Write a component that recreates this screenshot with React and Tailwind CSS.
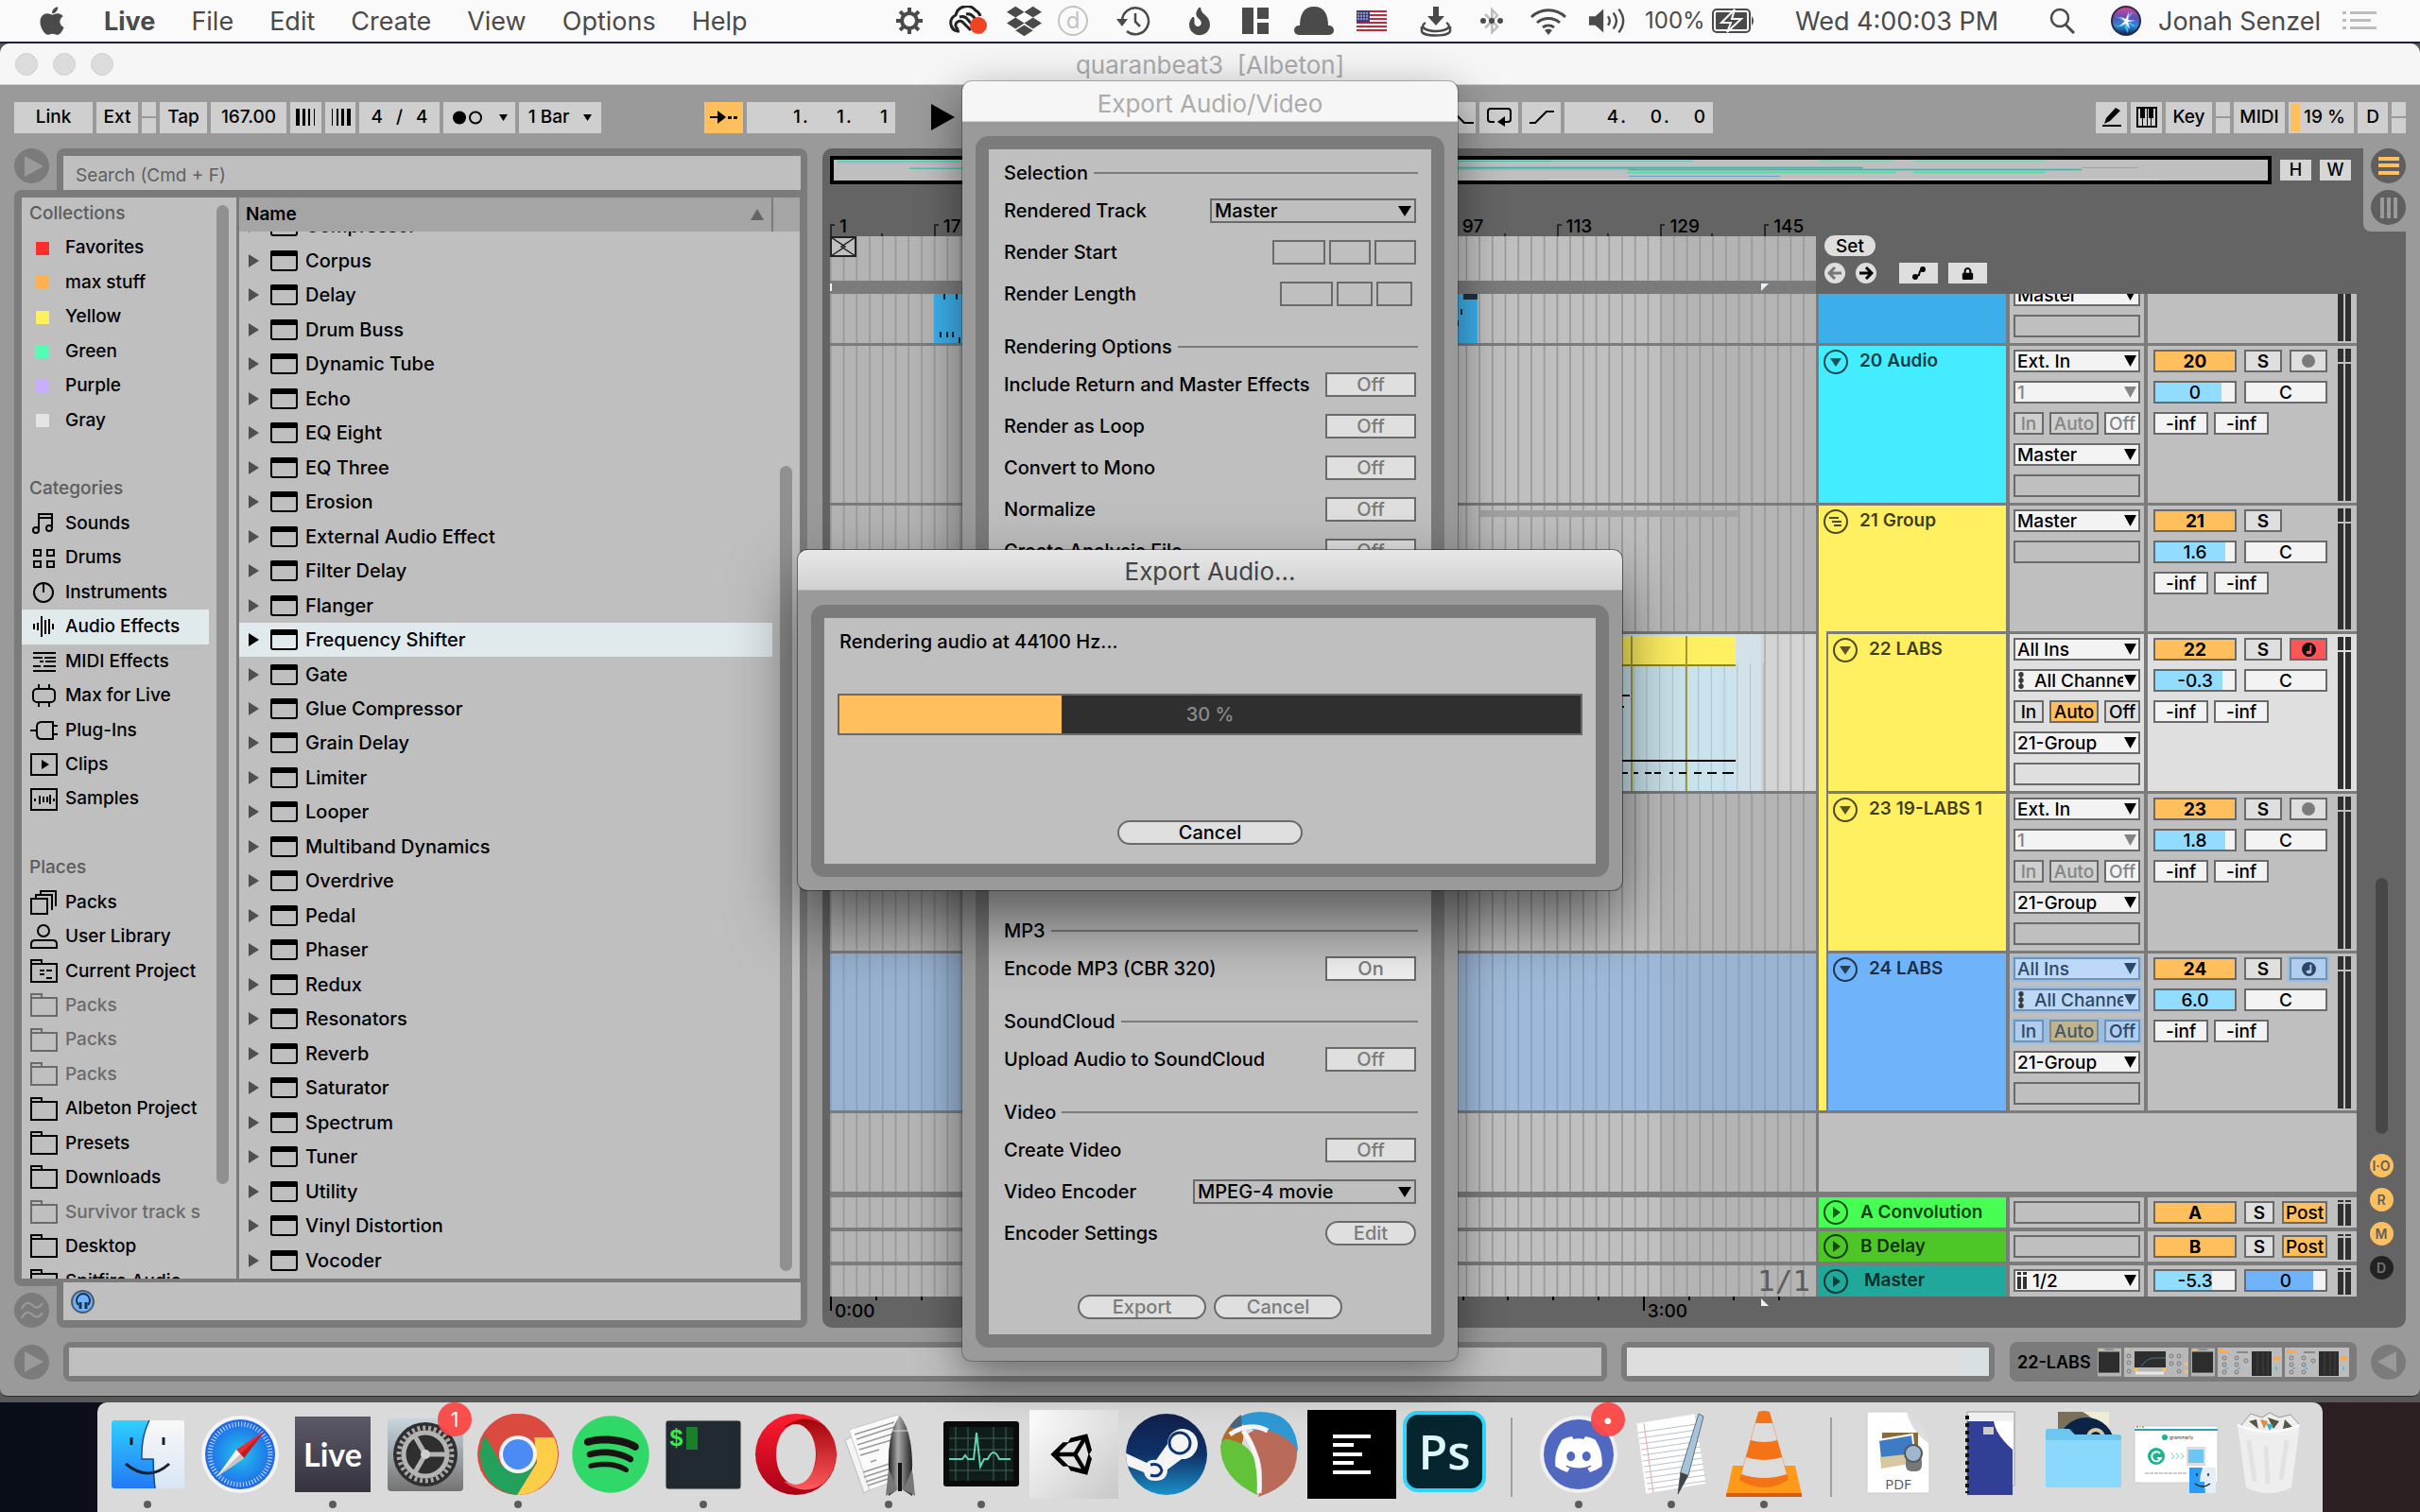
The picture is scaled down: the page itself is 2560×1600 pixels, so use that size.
import React from "react";
import { FaApple, FaDropbox, FaSpotify, FaUnity, FaBluetoothB, FaLock, FaFire } from "react-icons/fa";
import { FaDiscord } from "react-icons/fa6";

/* ---------- menu bar ---------- */

const GearIcon = () => (
  <svg viewBox="0 0 30 30" className="size-[30px]">
    {[0, 45, 90, 135, 180, 225, 270, 315].map((a) => (
      <rect key={a} x="13" y="1" width="4" height="7" fill="#4a4a4a" transform={`rotate(${a} 15 15)`} />
    ))}
    <circle cx="15" cy="15" r="8" fill="none" stroke="#4a4a4a" strokeWidth="4" />
  </svg>
);

const CloudIcon = () => (
  <svg viewBox="0 0 44 32" className="h-[32px] w-[44px]" fill="none">
    <path d="M13 27H11a9 9 0 0 1-2-17A12 12 0 0 1 30 5q4 2 5 6" stroke="#222" strokeWidth="3" />
    <path d="M25 26l-8-8a4.500 4.500 0 1 0-5 7" stroke="#222" strokeWidth="3" />
    <path d="M13 12a8 8 0 0 1 9 3l6 7M20 9a8 8 0 0 1 8 3l4 4" stroke="#222" strokeWidth="3" />
    <circle cx="33" cy="21" r="9" fill="#ee4423" />
  </svg>
);

const DIcon = () => (
  <span className="flex size-[32px] items-center justify-center rounded-full border-2 border-[#c4c4c4] text-2xl leading-none text-[#c4c4c4]">d</span>
);

const TimeMachine = () => (
  <svg viewBox="0 0 38 34" className="h-[34px] w-[38px]" fill="none" stroke="#4a4a4a" strokeWidth="2.500">
    <path d="M7 17A14 14 0 1 1 12 28" />
    <path d="M21 9v9l5 5" />
    <path d="M1 15l6 8 6-8z" fill="#4a4a4a" stroke="none" />
  </svg>
);

const LayoutIcon = () => (
  <svg viewBox="0 0 28 28" className="size-[28px]" fill="#4a4a4a">
    <rect width="12" height="28" />
    <rect x="16" width="12" height="12" />
    <rect x="16" y="16" width="12" height="12" />
  </svg>
);

const HatIcon = () => (
  <svg viewBox="0 0 42 30" className="h-[30px] w-[42px]" fill="#4a4a4a">
    <path d="M6 21C6 8 10 0 21 0s15 8 15 21z" />
    <rect x="0" y="20" width="42" height="10" rx="5" />
  </svg>
);

const FlagIcon = () => (
  <svg viewBox="0 0 32 22" className="h-[22px] w-[32px]">
    <rect width="32" height="22" fill="#fff" />
    {[0, 1, 2, 3, 4, 5].map((i) => (
      <rect key={i} y={i * 4} width="32" height="2" fill="#c02a3c" />
    ))}
    <rect width="14" height="13" fill="#40407e" />
    {[3, 6, 9].map((y) => [2, 5, 8, 11].map((x) => <circle key={`${x}-${y}`} cx={x} cy={y} r="0.8" fill="#fff" />))}
  </svg>
);

const DownloadIcon = () => (
  <svg viewBox="0 0 34 34" className="size-[34px]" fill="none" stroke="#4a4a4a" strokeWidth="2.500">
    <path d="M14 2h6v10h6l-9 10-9-10h6z" fill="#4a4a4a" stroke="none" />
    <path d="M6 19c-8 5 2 9 11 9s19-4 11-9" />
    <path d="M2 23v5c1 6 29 6 30 0v-5" />
  </svg>
);

const WifiIcon = () => (
  <svg viewBox="0 0 40 30" className="h-[30px] w-[40px]" fill="none" stroke="#4a4a4a" strokeWidth="3">
    <path d="M2 11a26 26 0 0 1 36 0" />
    <path d="M8 17a18 18 0 0 1 24 0" />
    <path d="M14 22a10 10 0 0 1 12 0" />
    <path d="M16 25l4 5 4-5q-4-3-8 0z" fill="#4a4a4a" stroke="none" />
  </svg>
);

const VolumeIcon = () => (
  <svg viewBox="0 0 42 32" className="h-[32px] w-[42px]" fill="none" stroke="#4a4a4a" strokeWidth="2.500">
    <path d="M1 11h7l9-8v26l-9-8H1z" fill="#4a4a4a" stroke="none" />
    <path d="M22 11q4 5 0 10M28 7q7 9 0 18M34 3q10 13 0 26" />
  </svg>
);

const BatteryIcon = () => (
  <svg viewBox="0 0 46 26" className="h-[26px] w-[46px]">
    <rect x="1" y="1" width="39" height="24" rx="4" fill="none" stroke="#4a4a4a" strokeWidth="2" />
    <rect x="4" y="4" width="33" height="18" rx="1" fill="#4a4a4a" />
    <path d="M42 8q4 5 0 10z" fill="#4a4a4a" />
    <path d="M24 1L10 15h10l-4 10 15-14H21z" fill="#4a4a4a" stroke="#fafafa" strokeWidth="2" />
  </svg>
);

const SearchIcon = () => (
  <svg viewBox="0 0 28 28" className="size-[28px]" fill="none" stroke="#4a4a4a" strokeWidth="2.500">
    <circle cx="11" cy="11" r="9" />
    <path d="M17 18l9 9" strokeWidth="3" />
  </svg>
);

const SiriIcon = () => (
  <svg viewBox="0 0 32 32" className="size-[32px]">
    <defs>
      <linearGradient id="siri" x2="0" y2="1">
        <stop offset="0" stopColor="#d0479c" />
        <stop offset="0.4" stopColor="#5a4fb8" />
        <stop offset="0.7" stopColor="#2a8fd8" />
        <stop offset="1" stopColor="#1a1c60" />
      </linearGradient>
    </defs>
    <circle cx="16" cy="16" r="16" fill="#2b2b40" />
    <circle cx="16" cy="16" r="14" fill="url(#siri)" />
    <path d="M5 12q9 0 11 4 3-9 8-9-5 4-6 10 5 1 8 6-6-4-9-4 2 6 1 10-4-5-3-10-5 4-9 3 6-2 8-5-3-3-9-5z" fill="#4fe0f8" opacity=".7" />
    <path d="M9 22l6-6-5-4 6 2 3-8-1 9 8 1-8 1 2 8-4-6z" fill="#fff" />
  </svg>
);

const ListIcon = () => (
  <svg viewBox="0 0 36 20" className="h-[20px] w-[36px]" fill="#bdbdbd">
    {[0, 8, 16].map((y, i) => (
      <g key={y}>
        <rect y={y} width="4" height="3" />
        <rect x="8" y={y} width={i === 1 ? 22 : 28} height="3" />
      </g>
    ))}
  </svg>
);

const Cell = ({ className, children, label }) => (
  <button aria-label={label} className={`flex shrink-0 items-center justify-center ${className}`}>{children}</button>
);

function MenuBar() {
  return (
    <header className="flex h-[44px] items-center bg-[#fafafa] text-[27px] leading-none whitespace-nowrap text-[#4a4a4a]">
      <nav aria-label="Application" className="flex items-center gap-[38px] pl-[38px]">
        <button aria-label="Apple"><FaApple className="size-[34px]" /></button>
        <button className="font-bold">Live</button>
        {["File", "Edit", "Create", "View", "Options", "Help"].map((m) => (
          <button key={m}>{m}</button>
        ))}
      </nav>
      <div className="ml-auto flex items-center pr-[46px]">
        <Cell label="Settings" className="w-[60px]"><GearIcon /></Cell>
        <Cell label="Creative Cloud" className="w-[64px]"><CloudIcon /></Cell>
        <Cell label="Dropbox" className="w-[54px]"><FaDropbox className="size-[37px]" /></Cell>
        <Cell label="d" className="w-[50px]"><DIcon /></Cell>
        <Cell label="Time Machine" className="w-[78px]"><TimeMachine /></Cell>
        <Cell label="Burn" className="w-[62px]"><FaFire className="h-[31px] w-[22px]" /></Cell>
        <Cell label="Layout" className="w-[56px]"><LayoutIcon /></Cell>
        <Cell label="Bartender" className="w-[68px]"><HatIcon /></Cell>
        <Cell label="Input language" className="w-[54px]"><FlagIcon /></Cell>
        <Cell label="Downloads" className="w-[82px]"><DownloadIcon /></Cell>
        <Cell label="Bluetooth" className="relative w-[36px]">
          <FaBluetoothB className="size-[30px] text-[#bdbdbd]" />
          <span className="absolute inset-x-[6px] flex justify-between">
            <i className="size-[6px] rounded-full bg-[#4a4a4a]" /><i className="size-[6px] rounded-full bg-[#4a4a4a]" /><i className="size-[6px] rounded-full bg-[#4a4a4a]" />
          </span>
        </Cell>
        <Cell label="Wi-Fi" className="w-[84px]"><WifiIcon /></Cell>
        <Cell label="Volume" className="w-[40px]"><VolumeIcon /></Cell>
        <span className="ml-[20px] w-[71px] text-2xl leading-none">100%</span>
        <BatteryIcon />
        <time className="ml-[42px] w-[220px]">Wed 4:00:03 PM</time>
        <Cell label="Search" className="ml-[26px] w-[74px]"><SearchIcon /></Cell>
        <Cell label="Siri" className="w-[60px]"><SiriIcon /></Cell>
        <span className="ml-[4px] w-[195px]">Jonah Senzel</span>
        <Cell label="Notifications" className="w-[36px]"><ListIcon /></Cell>
      </div>
    </header>
  );
}

/* ---------- control bar ---------- */

const Ctl = ({ className = "", children, label }) => (
  <button aria-label={label} className={`flex h-[33px] shrink-0 items-center justify-center whitespace-nowrap ${className.includes("bg-") ? "" : "bg-[#cfcfcf]"} ${className}`}>{children}</button>
);

const Split = () => (
  <span className="flex h-[33px] w-[15px] flex-col gap-[2px]">
    <i className="flex-1 bg-[#cfcfcf]" />
    <i className="flex-1 bg-[#cfcfcf]" />
  </span>
);

const Bars = ({ flip }) => (
  <svg viewBox="0 0 24 18" className={flip ? "h-[18px] w-[24px] -scale-x-100" : "h-[18px] w-[24px]"}>
    <rect x="1" width="4" height="18" />
    <rect x="8" width="3" height="18" />
    <rect x="14" width="2" height="18" />
    <rect x="20" width="1" height="18" />
  </svg>
);

const Down = ({ className = "size-[10px]" }) => (
  <svg viewBox="0 0 12 12" className={className} fill="currentColor" preserveAspectRatio="none"><path d="M0 0h12L6 12z" /></svg>
);

const Position = ({ parts }) => (
  <Ctl className="w-[157px] justify-end pr-[8px]">
    {parts.map((p, i) => <span key={i} className={i < 2 ? "flex w-[46px] gap-[2px]" : ""}>{p}{i < 2 && <span>.</span>}</span>)}
  </Ctl>
);

function ControlBar() {
  return (
    <div className="flex h-[67px] items-center px-[15px] pt-px text-[19px] font-medium text-black">
      <div className="flex gap-1">
        <Ctl className="w-[83px]">Link</Ctl>
        <Ctl className="w-[44px]">Ext</Ctl>
        <Split />
        <Ctl className="w-[50px]">Tap</Ctl>
        <Ctl className="w-[80px]">167.00</Ctl>
        <Ctl label="Nudge down" className="w-[33px]"><Bars /></Ctl>
        <Ctl label="Nudge up" className="w-[32px]"><Bars flip /></Ctl>
        <Ctl className="w-[85px] gap-[14px]"><span>4</span><span>/</span><span>4</span></Ctl>
        <Ctl label="Metronome" className="w-[76px] gap-[18px]">
          <svg viewBox="0 0 32 15" className="h-[15px] w-[32px]"><circle cx="8" cy="7.500" r="7" /><circle cx="25" cy="7.500" r="6" fill="none" stroke="#000" strokeWidth="2" /></svg>
          <Down className="h-[7px] w-[9px]" />
        </Ctl>
        <Ctl className="w-[87px] gap-[15px]">1 Bar<Down className="h-[7px] w-[9px]" /></Ctl>
      </div>
      <div className="ml-[109px] flex items-center gap-1">
        <Ctl label="Follow" className="w-[41px] bg-[#ffbf5c]">
          <svg viewBox="0 0 30 16" className="h-[16px] w-[30px]"><path d="M0 7h8V1l9 7-9 7V9H0zM19 7h4v3h-4zM25 7h4v3h-4z" /></svg>
        </Ctl>
        <Position parts={["1", "1", "1"]} />
        <button aria-label="Play" className="ml-[34px]"><svg viewBox="0 0 25 28" className="h-[28px] w-[25px]"><path d="M0 0l25 14L0 28z" /></svg></button>
        <Ctl label="Punch in" className="ml-[507px] w-[40px] justify-end">
          <svg viewBox="0 0 34 16" className="h-[16px] w-[34px]" fill="none" stroke="#000" strokeWidth="2"><path d="M2 2h8l12 12h10" /></svg>
        </Ctl>
        <Ctl label="Loop" className="w-[41px]">
          <svg viewBox="0 0 28 22" className="h-[22px] w-[28px]" fill="none" stroke="#000" strokeWidth="2"><path d="M9 16H5q-3 0-3-3V5q0-3 3-3h18q3 0 3 3v8q0 3-3 3h-4" /><path d="M20 10v11l-8-5z" fill="#000" stroke="none" /></svg>
        </Ctl>
        <Ctl label="Punch out" className="w-[41px]">
          <svg viewBox="0 0 26 14" className="h-[14px] w-[26px]" fill="none" stroke="#000" strokeWidth="2"><path d="M0 13h6L18 1h8" /></svg>
        </Ctl>
        <Position parts={["4", "0", "0"]} />
      </div>
      <div className="ml-auto flex gap-1">
        <Ctl label="Draw mode" className="w-[33px]">
          <svg viewBox="0 0 22 22" className="size-[22px]"><path d="M3 18l2-6L15 1l5 3L9 15zM1 19h20v2H1z" /></svg>
        </Ctl>
        <Ctl label="Keyboard" className="w-[33px]">
          <svg viewBox="0 0 22 22" className="size-[22px]"><path d="M1 1h20v20H1z" fill="none" stroke="#000" strokeWidth="2" /><path d="M4 1h5v11H4zM13 1h5v11h-5zM11 1h1v20h-1zM6 12h1v9H6zM15 12h1v9h-1z" /></svg>
        </Ctl>
        <Ctl className="w-[49px]">Key</Ctl>
        <Split />
        <Ctl className="w-[54px]">MIDI</Ctl>
        <button className="flex h-[33px] w-[69px] items-center gap-1 bg-[#cfcfcf] pl-[2px] whitespace-nowrap"><i className="h-[29px] w-[10px] bg-[#ffbf5c]" />19 %</button>
        <Ctl className="w-[32px]">D</Ctl>
        <Split />
      </div>
    </div>
  );
}

/* ---------- browser ---------- */

const stroke = { fill: "none", stroke: "currentColor", strokeWidth: 2 };
const folder = <path {...stroke} d="M1 24V1h11v4h16v19zM1 5h11" />;

const SIDE_ICONS = {
  notes: <g {...stroke}><path d="M9 20V3h14v15M9 7h14" /><circle cx="6" cy="20" r="3" /><circle cx="20" cy="18" r="3" /></g>,
  drums: <g {...stroke}><path d="M4 4h7v6H4zM18 4h7v6h-7zM4 16h7v6H4zM18 16h7v6h-7z" /></g>,
  knob: <g {...stroke}><circle cx="14" cy="13" r="10" /><path d="M14 3v10" /></g>,
  wave: <path {...stroke} d="M4 10v6M8 9v8M12 2v22M16 6v15M20 5v16M24 10v6" />,
  midi: <path {...stroke} d="M3 4h24M3 23h24M3 9h10M15 9h12M10 13h4M16 13h11M3 18h8M14 18h13" />,
  max: <g {...stroke}><rect x="3" y="6" width="23" height="14" rx="4" /><path d="M9 1v5M20 1v5M9 20v5M20 20v5" /></g>,
  plug: <g {...stroke}><path d="M0 13h7M24 4H12q-5 0-5 5v8q0 5 5 5h12zM24 8h5M24 17h5" /></g>,
  clip: <g><path {...stroke} d="M1 2h27v22H1z" /><path d="M12 8l8 5-8 5z" fill="currentColor" /></g>,
  sample: <path {...stroke} d="M1 2h27v22H1zM5 12v3M10 9v9M14 10v6M18 10v6M21 8v10M25 12v3" />,
  packs: <path {...stroke} d="M1 9h17v16H1zM6 9V5h17v16M11 5V1h16v16" />,
  user: <g {...stroke}><circle cx="14" cy="7" r="6" /><path d="M1 25v-4q0-4 4-4h19q4 0 4 4v4z" /></g>,
  project: <path {...stroke} d="M1 24V1h11v4h16v19zM1 5h11M10 12h5M17 12h6M10 16h5M17 20h6" />,
  folder,
};

const SIDEBAR = [
  ["h", "Collections"], ["c", "Favorites", "bg-[#ff2d2d]"], ["c", "max stuff", "bg-[#ffb04f]"], ["c", "Yellow", "bg-[#fff05f]"],
  ["c", "Green", "bg-[#50ffb4]"], ["c", "Purple", "bg-[#c9adff]"], ["c", "Gray", "bg-[#e4e4e4]"], ["e"],
  ["h", "Categories"], ["i", "Sounds", "notes"], ["i", "Drums", "drums"], ["i", "Instruments", "knob"], ["s", "Audio Effects", "wave"],
  ["i", "MIDI Effects", "midi"], ["i", "Max for Live", "max"], ["i", "Plug-Ins", "plug"], ["i", "Clips", "clip"], ["i", "Samples", "sample"], ["e"],
  ["h", "Places"], ["i", "Packs", "packs"], ["i", "User Library", "user"], ["i", "Current Project", "project"],
  ["d", "Packs", "folder"], ["d", "Packs", "folder"], ["d", "Packs", "folder"], ["i", "Albeton Project", "folder"],
  ["i", "Presets", "folder"], ["i", "Downloads", "folder"], ["d", "Survivor track s", "folder"], ["i", "Desktop", "folder"], ["i", "Spitfire Audio", "folder"],
];

const DEVICES = [
  "Compressor", "Corpus", "Delay", "Drum Buss", "Dynamic Tube", "Echo", "EQ Eight", "EQ Three", "Erosion", "External Audio Effect",
  "Filter Delay", "Flanger", "Frequency Shifter", "Gate", "Glue Compressor", "Grain Delay", "Limiter", "Looper", "Multiband Dynamics",
  "Overdrive", "Pedal", "Phaser", "Redux", "Resonators", "Reverb", "Saturator", "Spectrum", "Tuner", "Utility", "Vinyl Distortion", "Vocoder",
];

function SideRow({ kind, label, extra }) {
  if (kind === "e") return <li aria-hidden="true" />;
  if (kind === "h") return <li className="flex items-center pl-[8px] text-[#5c5c5c]"><h2 className="text-[19px] font-medium">{label}</h2></li>;
  const tone = kind === "d" ? "text-[#6a6a6a]" : "text-black";
  return (
    <li className={kind === "s" ? "flex w-[198px] items-center bg-[#e0e9ec]" : "flex w-[198px] items-center"}>
      <button className={`flex w-full items-center ${tone}`}>
        <span className="flex w-[46px] shrink-0 items-center pl-[9px]">
          {kind === "c" ? <i className={`ml-[6px] size-[14px] ${extra}`} /> : <svg viewBox="0 0 30 26" className="h-[26px] w-[30px]">{SIDE_ICONS[extra]}</svg>}
        </span>
        <span className="w-[152px] overflow-hidden text-left whitespace-nowrap">{label}</span>
      </button>
    </li>
  );
}

const Round = ({ children, label, className = "bg-[#7b7b7b]" }) => (
  <button aria-label={label} className={`flex size-[37px] shrink-0 items-center justify-center rounded-full text-[#9a9a9a] ${className}`}>{children}</button>
);

const PlayGlyph = ({ left }) => (
  <svg viewBox="0 0 22 22" className={left ? "mr-1 size-[22px] rotate-180" : "ml-1 size-[22px]"} fill="currentColor"><path d="M1 0l20 11L1 22z" /></svg>
);

function Browser() {
  return (
    <section aria-label="Browser" className="flex w-[839px] shrink-0 flex-col">
      <div className="flex h-[44px]">
        <Round label="Show browser"><PlayGlyph /></Round>
        <div className="ml-[8px] flex-1 rounded-t-[8px] bg-[#7b7b7b] pt-[8px] pr-[7px] pl-[7px]">
          <input aria-label="Search" placeholder="Search (Cmd + F)" className="h-[40px] w-full bg-[#bfbfbf] pl-[13px] text-[19px] placeholder:text-[#5f5f5f]" />
        </div>
      </div>
      <div className="flex min-h-0 flex-1 rounded-tl-[8px] rounded-bl-[8px] bg-[#7b7b7b] px-[8px] pt-[8px] pb-[8px]">
        <div className="flex w-[227px] shrink-0 justify-between overflow-hidden bg-[#bfbfbf] pr-[8px]">
          <ul className="-mt-px grid h-[1166px] grid-rows-[repeat(32,minmax(0,1fr))] text-[19px] font-medium">
            {SIDEBAR.map(([kind, label, extra], i) => <SideRow key={i} kind={kind} label={label} extra={extra} />)}
          </ul>
          <i className="mt-[8px] mb-[100px] w-[13px] rounded-full bg-[#909090]" />
        </div>
        <div className="ml-[3px] flex min-w-0 flex-1 flex-col bg-[#bfbfbf]">
          <div className="flex h-[36px] shrink-0 items-center bg-[#a5a5a5] text-[19px] font-semibold">
            <span className="flex-1 pl-[7px]">Name</span>
            <svg viewBox="0 0 14 12" className="mr-[8px] h-[12px] w-[14px]" fill="#666"><path d="M7 0l7 12H0z" /></svg>
            <i className="h-full w-[30px] border-l-2 border-[#7b7b7b]" />
          </div>
          <div className="flex min-h-0 flex-1 overflow-hidden">
            <ul className="-mt-[24px] grid h-[1131px] flex-1 grid-rows-[repeat(31,minmax(0,1fr))] text-[20px] font-medium">
              {DEVICES.map((d) => {
                const on = d === "Frequency Shifter";
                return (
                  <li key={d} className={on ? "flex bg-[#e0e9ec]" : "flex"}>
                    <button className="flex flex-1 items-center pl-[10px]">
                      <svg viewBox="0 0 11 14" className="h-[14px] w-[11px]" fill={on ? "#000" : "#4f4f4f"}><path d="M0 0l11 7-11 7z" /></svg>
                      <svg viewBox="0 0 29 22" className="ml-[12px] h-[22px] w-[29px]"><rect x="1" y="1" width="27" height="20" rx="2" fill="none" stroke="#000" strokeWidth="2" /><path d="M0 6V2q0-2 2-2h25q2 0 2 2v4z" /></svg>
                      <span className="ml-[8px]">{d}</span>
                    </button>
                  </li>
                );
              })}
            </ul>
            <i className="mt-[248px] mr-[8px] mb-[8px] ml-[8px] w-[13px] rounded-full bg-[#909090]" />
          </div>
        </div>
      </div>
      <div className="flex h-[44px] items-end">
        <Round label="Groove pool">
          <svg viewBox="0 0 24 20" className="h-[20px] w-[24px]" {...stroke}><path d="M1 8q5-10 11-4t11-2M1 18q5-10 11-4t11-2" /></svg>
        </Round>
        <div className="ml-[8px] h-full flex-1 rounded-b-[8px] bg-[#7b7b7b] px-[7px] pb-[8px]">
          <div className="-mt-[4px] flex h-[40px] items-center bg-[#bfbfbf] pl-[8px]">
            <button aria-label="Preview" className="flex size-[25px] items-center justify-center rounded-full border-2 border-[#4d5c70] bg-[#6fb4fb]">
              <svg viewBox="0 0 18 18" className="size-[18px]" fill="none" stroke="#17304f" strokeWidth="2"><path d="M4 13A7 7 0 1 1 14 13" /><path d="M6 10v7M12 10v7" strokeWidth="3" /></svg>
            </button>
          </div>
        </div>
      </div>
    </section>
  );
}

/* ---------- arrangement ---------- */

const BARS = Array.from({ length: 77 }, (_, i) => i);

function Grid({ light = "#bfbfbf", dark = "#b4b4b4", line = "#9a9a9a" }) {
  return (
    <svg viewBox="0 0 152 10" preserveAspectRatio="none" className="absolute inset-0 size-full">
      <rect width="152" height="10" fill={dark} />
      <rect x="32" width="32" height="10" fill={light} />
      <rect x="96" width="32" height="10" fill={light} />
      {BARS.map((b) => <rect key={b} x={b * 2} width="0.25" height="10" fill={line} />)}
    </svg>
  );
}

function Overview() {
  const seg = [
    [4, 3, 130, "#3fd6a0", 4], [4, 10, 130, "#c8a8d8", 4], [80, 26, 60, "#25b9a8", 3], [240, 4, 670, "#35c7b0", 2],
    [660, 3, 100, "#25b9a8", 2], [650, 23, 440, "#25c0b4", 5], [650, 29, 200, "#25c0b4", 2], [1043, 3, 80, "#55d8a8", 2],
    [1143, 3, 140, "#55d8a8", 2], [842, 29, 480, "#25c0b4", 5], [1322, 24, 60, "#25c0b4", 2], [840, 38, 285, "#4fe0a0", 5],
    [1143, 38, 140, "#4fe0a0", 5], [842, 52, 160, "#3b8fd8", 2], [757, 60, 85, "#e8e060", 2], [1003, 60, 400, "#e8e060", 2],
  ];
  return (
    <svg viewBox="0 0 1519 66" preserveAspectRatio="none" className="size-full">
      <rect width="1519" height="66" fill="#bfbfbf" />
      {seg.map(([x, y, w, c, h], i) => <rect key={i} x={x} y={y} width={w} height={h} fill={c} />)}
    </svg>
  );
}

function Ruler() {
  const labels = [1, 17, null, null, null, null, 97, 113, 129, 145];
  return (
    <div className="flex h-[31px] items-stretch text-[19px] leading-none text-black">
      {labels.map((l, i) => (
        <span key={i} className={i === 9 ? "flex grow-[8] basis-0" : "flex grow-[16] basis-0"}>
          <span className="mt-[18px] flex w-full border-l-2 border-black/60">
            <i className="h-[2px] w-[3px] bg-black/60" />
            {l && <span className="-mt-[7px] ml-[5px]">{l}</span>}
          </span>
          {i < 9 && <i className="h-[3px] w-[2px] -translate-x-[54px] self-end bg-black/60" />}
        </span>
      ))}
    </div>
  );
}

const Small = ({ className = "", children, label }) => (
  <button aria-label={label} className={`flex h-[24px] items-center justify-center border-2 leading-none whitespace-nowrap ${className.includes("border-") ? "" : "border-[#6a6a6a]"} ${className}`}>{children}</button>
);

const Pick = ({ value, label, dim, blue, lead }) => (
  <span className={`relative flex h-[24px] items-center border-2 ${blue ? "border-[#6f93b8] bg-[#bcd8f6] text-[#2c4868] outline-2 outline-[#9dbddf]" : dim ? "border-[#6a6a6a] bg-[#f3f3f3] text-[#858585]" : "border-[#6a6a6a] bg-[#f3f3f3] text-black"}`}>
    {lead && <svg viewBox="0 0 6 20" className="ml-[3px] h-[18px] w-[6px] shrink-0" fill="#3a3a3a"><circle cx="3" cy="3" r="3" /><circle cx="3" cy="10" r="3" /><circle cx="3" cy="17" r="3" /><path d="M2 3h2v14H2z" /></svg>}
    <select aria-label={label} className={`h-full w-full min-w-0 appearance-none overflow-hidden leading-none ${lead ? "mr-[16px] pl-[11px]" : "pl-[2px]"}`}>
      <option>{value}</option>
    </select>
    <Down className="pointer-events-none absolute right-[2px] h-[12px] w-[13px]" />
  </span>
);

const Field = ({ value, label, fill, tone = "#92ddff" }) => (
  <input
    aria-label={label}
    readOnly
    value={value}
    className="h-[24px] w-[88px] border-2 border-[#6a6a6a] bg-[#f3f3f3] text-center leading-none"
    style={{ backgroundImage: `linear-gradient(to right, ${tone} ${fill}%, transparent ${fill}%)` }}
  />
);

const Empty = () => <span className="block h-[24px] border-2 border-[#6a6a6a]" />;

const Meter = ({ short }) => (
  <div className="mt-[3px] mr-[6px] mb-[2px] ml-auto flex flex-col">
    <span className={short ? "mb-[2px] flex h-[2px] gap-[2px]" : "mb-[2px] flex h-[14px] gap-[2px]"}><i className="w-[6px] bg-[#2f2f2f]" /><i className="w-[6px] bg-[#2f2f2f]" /></span>
    <span className="flex flex-1 gap-[2px]"><i className="w-[6px] bg-[#2f2f2f]" /><i className="w-[6px] bg-[#2f2f2f]" /></span>
  </div>
);

const NoteDot = ({ color, cut }) => (
  <svg viewBox="0 0 16 16" className="size-[15px]"><circle cx="8" cy="8" r="8" fill={color} /><path d="M9 3h2v8q0 2-3 2t-3-2 4-2z" fill={cut} /></svg>
);

function Mixer({ t, bg = "bg-[#bfbfbf]" }) {
  return (
    <div className={`flex w-[221px] shrink-0 ${bg}`}>
      <div className="flex flex-col gap-[9px] pt-[4px] pl-[6px]">
        <div className="flex gap-[8px]">
          <Small className="w-[88px] bg-[#ffbf5c] font-bold">{t.num}</Small>
          <Small className="w-[40px] bg-[#dfdfdf] font-semibold">S</Small>
          {t.arm === "audio" && <Small label="Arm" className="w-[40px] bg-[#dfdfdf]"><i className="size-[14px] rounded-full bg-[#7b7b7b]" /></Small>}
          {t.arm === "on" && <Small label="Arm" className="w-[40px] bg-[#ff5458]"><NoteDot color="#111" cut="#ff5458" /></Small>}
          {t.arm === "midi" && <Small label="Arm" className="w-[40px] border-[#6f93b8] bg-[#b0cdee] outline-2 outline-[#9dbddf]"><NoteDot color="#2c4868" cut="#b0cdee" /></Small>}
        </div>
        <div className="flex gap-[8px]">
          <Field label={`Volume ${t.num}`} value={t.vol} fill={t.fill} />
          <Small className="w-[88px] bg-[#f3f3f3]">C</Small>
        </div>
        <div className="flex gap-[6px]">
          <Small className="w-[58px] bg-[#f3f3f3]">-inf</Small>
          <Small className="w-[58px] bg-[#f3f3f3]">-inf</Small>
        </div>
      </div>
      <Meter />
    </div>
  );
}

function InOut({ t, bg = "bg-[#bfbfbf]" }) {
  const tone = {
    off: ["bg-[#cfcfcf] text-[#858585]", "bg-[#cfcfcf] text-[#858585]", "bg-[#f3f3f3] text-[#858585]"],
    auto: ["bg-[#dfdfdf]", "bg-[#ffbf5c]", "bg-[#dfdfdf]"],
    blue: ["bg-[#b0cdee] text-[#2c4868] border-[#6f93b8]", "bg-[#c2b489] text-[#45566b] border-[#7f8a92]", "bg-[#b0cdee] text-[#2c4868] border-[#6f93b8]"],
  }[t.monitor];
  return (
    <div className={`flex w-[142px] shrink-0 flex-col gap-[9px] px-[4px] pt-[4px] ${bg}`}>
      {t.input && <Pick label="Input type" value={t.input} blue={t.monitor === "blue"} />}
      {t.channel && <Pick label="Input channel" value={t.channel} dim={t.monitor === "off"} blue={t.monitor === "blue"} lead={t.channel !== "1"} />}
      {tone && (
        <div className={t.monitor === "blue" ? "flex justify-between bg-[#9dbddf] outline-2 outline-[#9dbddf]" : "flex justify-between"}>
          <Small className={`w-[32px] ${tone[0]}`}>In</Small>
          <Small className={`w-[52px] ${tone[1]}`}>Auto</Small>
          <Small className={`w-[38px] ${tone[2]}`}>Off</Small>
        </div>
      )}
      <Pick label="Output" value={t.output} />
      <Empty />
    </div>
  );
}

const Fold = ({ kind }) => (
  <svg viewBox="0 0 26 26" className="size-[26px] shrink-0" fill="none" stroke="#000" strokeOpacity=".7" strokeWidth="2">
    <circle cx="13" cy="13" r="12" />
    {kind === "group" && <path d="M6 9h10M9 13h10M11 17h8" />}
    {kind === "down" && <path d="M7 9h12l-6 9z" fill="#000" fillOpacity=".65" stroke="none" />}
    {kind === "right" && <path d="M10 7l8 6-8 6z" fill="#000" fillOpacity=".65" stroke="none" />}
  </svg>
);

const TRACKS = [
  { num: "20", name: "20 Audio", color: "bg-[#43edff]", fold: "down", input: "Ext. In", channel: "1", monitor: "off", output: "Master", vol: "0", fill: 83, arm: "audio", h: "h-[169px]" },
  { num: "21", name: "21 Group", color: "bg-[#fff061]", fold: "group", output: "Master", vol: "1.6", fill: 88, h: "h-[136px]" },
  { num: "22", name: "22 LABS", color: "bg-[#fff061]", fold: "down", child: true, input: "All Ins", channel: "All Channels", monitor: "auto", output: "21-Group", vol: "-0.3", fill: 84, arm: "on", selected: true, h: "h-[169px]" },
  { num: "23", name: "23 19-LABS 1", color: "bg-[#fff061]", fold: "down", child: true, input: "Ext. In", channel: "1", monitor: "off", output: "21-Group", vol: "1.8", fill: 88, arm: "audio", h: "h-[169px]" },
  { num: "24", name: "24 LABS", color: "bg-[#6fb4fb]", fold: "down", child: true, input: "All Ins", channel: "All Channels", monitor: "blue", output: "21-Group", vol: "6.0", fill: 100, arm: "midi", h: "h-[169px]" },
];

function TrackRow({ t }) {
  const bg = t.selected ? "bg-[#dfdfdf]" : "bg-[#bfbfbf]";
  return (
    <div className={`flex shrink-0 border-b-[3px] border-[#7b7b7b] bg-[#7b7b7b] ${t.h}`}>
      <div className="relative min-w-0 flex-1 overflow-hidden">
        {t.num === "24" ? <Grid light="#9fbad9" dark="#99b3d1" line="#86a0c0" /> : t.selected ? <Grid light="#dfdfdf" dark="#d4d4d4" line="#b0b0b0" /> : <Grid />}
        {t.num === "21" && <i className="absolute top-[5px] left-[66%] h-[7px] w-[26%] bg-[#a3a3a3]" />}
        {t.num === "22" && <LabsClip />}
      </div>
      <div className="ml-[3px] flex w-[198px] shrink-0">
        {t.child && <i className="-mt-[3px] mr-[2px] w-[8px] bg-[#fff061]" />}
        <div className={`flex flex-1 gap-[12px] pt-[4px] pl-[5px] ${t.color}`}>
          <Fold kind={t.fold} />
          <span className="leading-[24px] font-semibold whitespace-nowrap text-black/75">{t.name}</span>
        </div>
      </div>
      <div className="mx-[4px] flex"><InOut t={t} bg={bg} /></div>
      <Mixer t={t} bg={bg} />
    </div>
  );
}

const LabsClip = () => (
  <svg viewBox="0 0 1043 166" preserveAspectRatio="none" className="absolute inset-0 size-full">
    <rect x="700" y="0" width="285" height="166" fill="#cbe3ec" />
    <rect x="958" y="0" width="27" height="166" fill="#d3e2e8" />
    {Array.from({ length: 22 }, (_, i) => <rect key={i} x={699 + i * 13.7} y="31" width="1" height="135" fill="#a9c3cc" />)}
    <rect x="700" y="2" width="258" height="31" fill="#fff061" />
    <rect x="700" y="32" width="258" height="2" fill="#8c8535" />
    <rect x="847" y="2" width="2" height="164" fill="#a09a3c" />
    <rect x="905" y="2" width="2" height="164" fill="#a09a3c" />
    <rect x="700" y="64" width="146" height="2" />
    <rect x="700" y="133" width="258" height="2" />
    <path d="M820 77h20M838 147h6M850 147h5M862 147h7M872 147h7M888 147h4M898 147h8M914 147h8M928 147h10M944 147h12" stroke="#000" strokeWidth="2" />
  </svg>
);

function ReturnRow({ name, color, letter }) {
  return (
    <div className="mb-[4px] flex h-[32px] shrink-0">
      <div className="relative flex-1"><Grid /></div>
      <div className={`ml-[3px] flex w-[198px] shrink-0 items-center gap-[13px] pl-[5px] ${color}`}>
        <Fold kind="right" />
        <span className="font-semibold whitespace-nowrap text-black/75">{name}</span>
      </div>
      <div className="mx-[4px] w-[142px] shrink-0 bg-[#bfbfbf] p-[4px]"><Empty /></div>
      <div className="flex w-[221px] shrink-0 bg-[#bfbfbf]">
        <div className="flex gap-[8px] pt-[4px] pl-[6px]">
          <Small className="w-[88px] bg-[#ffbf5c] font-bold">{letter}</Small>
          <Small className="w-[32px] bg-[#dfdfdf] font-semibold">S</Small>
          <Small className="w-[48px] bg-[#ffbf5c]">Post</Small>
        </div>
        <Meter short />
      </div>
    </div>
  );
}

const Letter = ({ children, dark }) => (
  <button className={`flex size-[25px] items-center justify-center rounded-full text-sm leading-none font-semibold ${dark ? "bg-[#222] text-[#777]" : "bg-[#ffbf5c] text-[#5f5f5f]"}`}>{children}</button>
);

function Arrangement() {
  return (
    <section aria-label="Arrangement" className="relative flex min-w-0 flex-1 flex-col rounded-[10px] bg-[#646464] pt-[8px] pl-[8px] text-[19px] font-medium">
      <div className="flex h-[30px] shrink-0 items-center pr-[58px]">
        <div className="h-full flex-1 border-4 border-black"><Overview /></div>
        <button className="ml-[9px] h-[22px] w-[33px] bg-[#d6d6d6] text-[18px] leading-none">H</button>
        <button className="ml-[9px] h-[22px] w-[33px] bg-[#d6d6d6] text-[18px] leading-none">W</button>
      </div>
      <div className="flex min-h-0 flex-1">
        <div className="flex min-w-0 flex-1 flex-col">
          <div className="flex h-[116px] shrink-0">
            <div className="flex min-w-0 flex-1 flex-col pt-[24px]">
              <Ruler />
              <div className="relative h-[47px] shrink-0">
                <Grid />
                <svg viewBox="0 0 28 22" className="absolute top-0 left-0 h-[22px] w-[28px]" fill="#bfbfbf" stroke="#222" strokeWidth="2"><path d="M1 1h26v20H1z" /><path d="M1 1l15 10L1 21M27 1L12 11l15 10" fill="none" strokeWidth="1.500" /></svg>
              </div>
              <div className="flex h-[14px] items-center justify-between bg-[#7b7b7b] pr-[50px]">
                <i className="h-[8px] w-[2px] bg-[#e6f4fa]" />
                <svg viewBox="0 0 8 8" className="size-[8px]"><path d="M0 0h8L0 8z" fill="#e6f4fa" /></svg>
              </div>
            </div>
            <div className="ml-[3px] w-[569px] shrink-0 pt-[54px] pl-[6px]">
              <button className="block h-[22px] w-[54px] rounded-full bg-[#dedede] leading-none">Set</button>
              <div className="mt-[7px] flex items-center">
                <button aria-label="Previous locator" className="flex size-[22px] items-center justify-center rounded-full bg-[#dedede] text-[#777]"><Arrow flip /></button>
                <button aria-label="Next locator" className="ml-[11px] flex size-[22px] items-center justify-center rounded-full bg-[#dedede]"><Arrow /></button>
                <button aria-label="Automation" className="ml-[24px] flex h-[22px] w-[41px] items-center justify-center bg-[#dedede]">
                  <svg viewBox="0 0 14 14" className="size-[14px]"><circle cx="3" cy="11" r="3" /><circle cx="11" cy="3" r="3" /><path d="M3 11l4-2 1-4 3-2" stroke="#000" strokeWidth="2" fill="none" /></svg>
                </button>
                <button aria-label="Lock envelopes" className="ml-[11px] flex h-[22px] w-[41px] items-center justify-center bg-[#dedede]"><FaLock className="size-[13px]" /></button>
              </div>
            </div>
          </div>
          <div className="flex min-h-0 flex-1 flex-col overflow-hidden bg-[#7b7b7b]">
            <div className="flex h-[55px] shrink-0 border-b-[3px] border-[#7b7b7b]">
              <div className="relative flex-1 overflow-hidden">
                <Grid />
                <svg viewBox="0 0 1043 52" preserveAspectRatio="none" className="absolute inset-0 size-full">
                  <rect x="110" width="575" height="52" fill="#3cafeb" />
                  <rect x="670" width="15" height="6" fill="#1d3440" />
                  <path d="M121 0v6M134 0v6M117 40v6M124 40v6M130 40v6M137 46v6M668 16v6M664 28v6" stroke="#10202a" strokeWidth="2" />
                </svg>
              </div>
              <i className="ml-[3px] w-[198px] bg-[#3cafeb]" />
              <div className="mx-[4px] w-[142px] overflow-hidden bg-[#bfbfbf] px-[4px]">
                <div className="-mt-[11px] flex flex-col gap-[9px]"><Pick label="Output" value="Master" /><Empty /></div>
              </div>
              <div className="flex w-[221px] bg-[#bfbfbf]"><i className="mr-[6px] ml-auto flex gap-[2px] pb-[2px]"><i className="w-[6px] bg-[#2f2f2f]" /><i className="w-[6px] bg-[#2f2f2f]" /></i></div>
            </div>
            {TRACKS.map((t) => <TrackRow key={t.num} t={t} />)}
            <div className="flex min-h-0 flex-1">
              <div className="relative flex-1"><Grid /></div>
              <i className="ml-[3px] w-[569px] bg-[#bfbfbf]" />
            </div>
          </div>
          <div className="flex flex-col bg-[#7b7b7b] pt-[6px]">
            <ReturnRow name="A Convolution" color="bg-[#46ff52]" letter="A" />
            <ReturnRow name="B Delay" color="bg-[#4dc728]" letter="B" />
            <div className="flex h-[33px] shrink-0">
              <div className="relative flex flex-1 items-center justify-end pr-[6px]">
                <Grid />
                <span className="relative font-['DejaVu_Sans_Mono',monospace] text-[31px] leading-none text-[#5c5c5c]">1/1</span>
              </div>
              <div className="ml-[3px] flex w-[198px] shrink-0 items-center gap-[17px] bg-[#20a89a] pl-[5px]">
                <Fold kind="right" />
                <span className="font-semibold text-black/75">Master</span>
              </div>
              <div className="mx-[4px] w-[142px] shrink-0 bg-[#bfbfbf] p-[4px]">
                <span className="relative flex h-[24px] items-center border-2 border-[#6a6a6a] bg-[#f3f3f3]">
                  <svg viewBox="0 0 10 18" className="ml-[2px] h-[18px] w-[10px] shrink-0" fill="#333"><path d="M0 0h4v3H0zM6 0h4v3H6zM0 5h4v13H0zM6 5h4v13H6z" /></svg>
                  <select aria-label="Master output" className="w-full appearance-none pl-[6px] leading-none"><option>1/2</option></select>
                  <Down className="pointer-events-none absolute right-[2px] h-[12px] w-[13px]" />
                </span>
              </div>
              <div className="flex w-[221px] shrink-0 bg-[#bfbfbf]">
                <div className="flex gap-[8px] pt-[4px] pl-[6px]">
                  <Field label="Master volume" value="-5.3" fill={72} />
                  <Field label="Cue volume" value="0" fill={84} tone="#6fb4fb" />
                </div>
                <Meter short />
              </div>
            </div>
          </div>
          <div className="flex h-[33px] shrink-0">
            <div className="flex flex-1 items-start leading-none">
              {Array.from({ length: 22 }, (_, i) => (
                <span key={i} className="flex min-w-0 flex-1 basis-0">
                  <i className={i % 18 === 0 ? "h-[15px] w-[2px] shrink-0 bg-black" : "h-[4px] w-[2px] shrink-0 bg-black"} />
                  {i === 0 && <span className="mt-[6px] ml-[3px] whitespace-nowrap">0:00</span>}
                  {i === 18 && <span className="mt-[6px] ml-[3px] whitespace-nowrap">3:00</span>}
                  {i === 20 && <svg viewBox="0 0 8 8" className="mt-[2px] ml-[28px] size-[8px] shrink-0"><path d="M0 0v8h8z" fill="#e6f4fa" /></svg>}
                </span>
              ))}
            </div>
            <i className="w-[564px]" />
          </div>
        </div>
        <div className="flex w-[52px] shrink-0 flex-col items-center gap-[11px] pb-[51px]">
          <i className="mt-auto mb-[10px] h-[271px] w-[13px] rounded-full bg-[#474747]" />
          <Letter>I·O</Letter>
          <Letter>R</Letter>
          <Letter>M</Letter>
          <Letter dark>D</Letter>
        </div>
      </div>
      <div className="absolute top-0 right-0 flex h-[88px] w-[45px] flex-col items-end gap-[7px] rounded-bl-[8px] bg-[#9a9a9a]">
        <Round label="Arrangement view" className="bg-[#5f5f5f]">
          <svg viewBox="0 0 22 19" className="h-[19px] w-[22px]" fill="#ffbf5c"><path d="M0 0h22v4H0zM0 7h22v4H0zM0 15h22v4H0z" /></svg>
        </Round>
        <Round label="Session view" className="bg-[#5f5f5f]">
          <svg viewBox="0 0 20 22" className="h-[22px] w-[20px]" fill="#999"><path d="M1 0h4v22H1zM8 0h4v22H8zM15 0h4v22h-4z" /></svg>
        </Round>
      </div>
    </section>
  );
}

const Arrow = ({ flip }) => (
  <svg viewBox="0 0 16 14" className={flip ? "h-[14px] w-[16px] rotate-180" : "h-[14px] w-[16px]"} fill="none" stroke="currentColor" strokeWidth="3"><path d="M1 7h12M8 1l6 6-6 6" /></svg>
);

/* ---------- bottom strip ---------- */

const DeviceThumb = ({ kind }) => {
  if (kind === "small") {
    return <svg viewBox="0 0 26 31" className="h-[31px] w-[25px]"><rect width="26" height="31" fill="#b4b4b4" /><rect x="1" y="4" width="23" height="23" fill="#2d2d2d" /><path d="M2 1h3v2H2z" fill="#ffbf5c" /><path d="M8 1h10v1H8z" fill="#667" /></svg>;
  }
  if (kind === "filter") {
    return (
      <svg viewBox="0 0 68 31" className="h-[31px] w-[68px]">
        <rect width="68" height="31" fill="#b8b8b8" /><path d="M2 1h3v2H2z" fill="#ffbf5c" />
        <rect x="11" y="4" width="33" height="17" fill="#2d2d2d" /><path d="M18 20q6-9 14-9h12" stroke="#3d7a90" fill="none" />
        <g fill="none" stroke="#777"><circle cx="5" cy="9" r="2" /><circle cx="5" cy="16" r="2" /><circle cx="5" cy="25" r="2" /><circle cx="50" cy="9" r="2" /><circle cx="50" cy="17" r="2" /><circle cx="58" cy="9" r="2" /><circle cx="58" cy="17" r="2" /><circle cx="58" cy="25" r="2" /></g>
        <path d="M11 22h4v3h-4zM41 22h3v3h-3zM64 16h3v3h-3zM64 24h3v3h-3z" fill="#ffbf5c" />
        <path d="M12 27h30" stroke="#e8e8e8" strokeWidth="3" />
      </svg>
    );
  }
  return (
    <svg viewBox="0 0 68 31" className="h-[31px] w-[68px]">
      <rect width="68" height="31" fill="#bcbcbc" /><rect x="36" y="4" width="21" height="26" fill="#2b2b2b" /><path d="M42 5v24M48 5v24M53 5v24" stroke="#454545" />
      <path d="M2 1h3v2H2zM2 4h10v2H2zM59 10h7v3h-7z" fill="#ffa63d" /><path d="M20 4h12v2H20z" fill="#888" />
      <g fill="none" stroke="#777"><circle cx="7" cy="11" r="2" /><circle cx="7" cy="18" r="2" /><circle cx="7" cy="26" r="2" /><circle cx="20" cy="11" r="2" /><circle cx="20" cy="18" r="2" /><circle cx="20" cy="26" r="2" /><circle cx="30" cy="14" r="2" /></g>
      <path d="M8 22h3M21 22h3M62 20v4" stroke="#5fb7e0" strokeWidth="2" />
    </svg>
  );
};

function BottomStrip() {
  return (
    <div className="flex h-[42px] shrink-0 items-center px-[15px] text-[19px]">
      <Round label="Show info"><PlayGlyph /></Round>
      <div className="ml-[15px] h-full flex-1 rounded-[8px] bg-[#7b7b7b] p-[6px]"><div className="h-full bg-[#bfbfbf]" /></div>
      <div className="ml-[15px] h-full w-[395px] rounded-[8px] bg-[#7b7b7b] p-[6px]"><div className="h-full border-r-[28px] border-[#d8e0e3] bg-[#dedede]" /></div>
      <div className="ml-[16px] flex h-full w-[367px] items-center justify-between rounded-[8px] bg-[#7b7b7b] px-[8px]">
        <span className="text-[18px] font-semibold">22-LABS</span>
        <span className="flex gap-[3px]"><DeviceThumb kind="small" /><DeviceThumb kind="filter" /><DeviceThumb kind="small" /><DeviceThumb /><DeviceThumb /></span>
      </div>
      <Round label="Show devices" className="ml-[15px] bg-[#7b7b7b]"><PlayGlyph left /></Round>
    </div>
  );
}

/* ---------- dialogs ---------- */

const Toggle = ({ label, value = "Off" }) => (
  <button aria-label={label} className={`h-[26px] w-[96px] border-2 border-[#6a6a6a] leading-none text-[#7b7b7b] ${value === "On" ? "bg-[#f0f0f0]" : "bg-[#dfdfdf]"}`}>{value}</button>
);

const Row = ({ label, children }) => (
  <div className="flex h-[44px] items-center justify-between pr-[2px]"><span className="whitespace-nowrap">{label}</span>{children}</div>
);

const Group = ({ title, children, className = "" }) => (
  <section className={className}>
    <h3 className="flex h-[36px] items-center gap-[6px] whitespace-nowrap">{title}<i className="h-[2px] flex-1 bg-[#7b7b7b]" /></h3>
    {children}
  </section>
);

const Dropdown = ({ label, value, className }) => (
  <span className={`relative flex h-[26px] items-center border-2 border-[#6a6a6a] ${className}`}>
    <select aria-label={label} className="w-full appearance-none pl-[3px] leading-none"><option>{value}</option></select>
    <Down className="pointer-events-none absolute right-[3px] h-[11px] w-[14px]" />
  </span>
);

const Boxes = ({ label, widths }) => (
  <span className="flex gap-1">{widths.map((w, i) => <input key={i} aria-label={`${label} ${i + 1}`} className={`h-[26px] border-2 border-[#6a6a6a] ${w}`} />)}</span>
);

function ExportDialog() {
  return (
    <div role="dialog" aria-label="Export Audio/Video" className="absolute top-[86px] left-1/2 w-[524px] -translate-x-1/2 overflow-hidden rounded-[10px] bg-[#9a9a9a] text-[20px] font-medium text-black shadow-[0_16px_50px_rgba(0,0,0,0.45)] ring-1 ring-black/25">
      <h2 className="flex h-[43px] items-center justify-center border-b border-[#d0d0d0] bg-[#f6f6f6] pt-[4px] text-[26px] font-normal text-[#acacac]">Export Audio/Video</h2>
      <div className="m-[14px] mt-[15px] rounded-[14px] bg-[#7b7b7b] p-[14px]">
        <div className="bg-[#bfbfbf] px-[14px] pt-[7px] pb-[16px] pl-[16px]">
          <div className="flex flex-col gap-4">
            <Group title="Selection">
              <Row label="Rendered Track"><Dropdown label="Rendered Track" value="Master" className="w-[218px]" /></Row>
              <Row label="Render Start"><Boxes label="Render Start" widths={["w-[56px]", "w-[44px]", "w-[44px]"]} /></Row>
              <Row label="Render Length"><span className="mr-1"><Boxes label="Render Length" widths={["w-[56px]", "w-[38px]", "w-[38px]"]} /></span></Row>
            </Group>
            <Group title="Rendering Options" className="mb-[346px]">
              {["Include Return and Master Effects", "Render as Loop", "Convert to Mono", "Normalize", "Create Analysis File"].map((l) => (
                <Row key={l} label={l}><Toggle label={l} /></Row>
              ))}
            </Group>
            <Group title="MP3"><Row label="Encode MP3 (CBR 320)"><Toggle label="Encode MP3 (CBR 320)" value="On" /></Row></Group>
            <Group title="SoundCloud"><Row label="Upload Audio to SoundCloud"><Toggle label="Upload Audio to SoundCloud" /></Row></Group>
            <Group title="Video">
              <Row label="Create Video"><Toggle label="Create Video" /></Row>
              <Row label="Video Encoder"><Dropdown label="Video Encoder" value="MPEG-4 movie" className="w-[236px]" /></Row>
              <Row label="Encoder Settings"><button className="h-[26px] w-[96px] rounded-full border-2 border-[#6a6a6a] bg-[#dfdfdf] leading-none text-[#7b7b7b]">Edit</button></Row>
            </Group>
          </div>
          <div className="mt-[43px] flex justify-center gap-[8px] pr-[2px] text-[#7b7b7b]">
            <button className="h-[26px] w-[136px] rounded-full border-2 border-[#6a6a6a] bg-[#dfdfdf] leading-none">Export</button>
            <button className="h-[26px] w-[136px] rounded-full border-2 border-[#6a6a6a] bg-[#dfdfdf] leading-none">Cancel</button>
          </div>
        </div>
      </div>
    </div>
  );
}

function ProgressDialog({ percent }) {
  return (
    <div role="dialog" aria-label="Export Audio" className="absolute top-[582px] left-1/2 w-[872px] -translate-x-1/2 overflow-hidden rounded-[10px] bg-[#9a9a9a] text-[20px] font-medium text-black shadow-[0_32px_70px_rgba(0,0,0,0.55)] ring-1 ring-black/40">
      <h2 className="flex h-[43px] items-center justify-center border-b border-[#b0b0b0] bg-gradient-to-b from-[#e8e8e8] to-[#d0d0d0] pt-[3px] text-[26px] font-normal text-[#444]">Export Audio...</h2>
      <div className="m-[14px] mt-[15px] rounded-[14px] bg-[#7b7b7b] p-[14px]">
        <div className="flex flex-col items-center bg-[#bfbfbf] px-[14px] pt-[10px] pb-[20px]">
          <p className="self-start pl-[2px]">Rendering audio at 44100 Hz...</p>
          <div role="progressbar" aria-valuenow={percent} className="relative mt-[40px] flex h-[44px] w-full items-center justify-center border-2 border-[#696969] bg-[#2f2f2f] text-[#8a8a8a]">
            <i className="absolute inset-y-0 left-0 bg-[#ffbf5c]" style={{ width: `${percent}%` }} />
            <span className="relative">{percent} %</span>
          </div>
          <button className="mt-[90px] h-[26px] w-[196px] rounded-full border-2 border-[#6a6a6a] bg-[#dfdfdf] leading-none">Cancel</button>
        </div>
      </div>
    </div>
  );
}

/* ---------- dock ---------- */

const Art = ({ children }) => <svg viewBox="0 0 94 94" className="size-[94px]">{children}</svg>;

const Finder = () => (
  <Art>
    <defs>
      <linearGradient id="fa" x2="0" y2="1"><stop stopColor="#2fd0ff" /><stop offset="1" stopColor="#2379f4" /></linearGradient>
      <linearGradient id="fb" x2="0" y2="1"><stop stopColor="#f8f8f8" /><stop offset="1" stopColor="#d9e6f5" /></linearGradient>
    </defs>
    <rect x="9" y="11" width="77" height="72" rx="3" fill="url(#fb)" />
    <path d="M12 11h37q-9 18-8 41h13q0 16 1 31H12q-3 0-3-3V14q0-3 3-3z" fill="url(#fa)" />
    <path d="M49 11q-9 18-8 41h12q0 16 2 31" fill="none" stroke="#1b4a86" strokeWidth="1.500" />
    <path d="M30 29v8M64 29v8" stroke="#17222f" strokeWidth="3" />
    <path d="M24 57q24 20 46 0" fill="none" stroke="#17222f" strokeWidth="3" />
  </Art>
);

const Safari = () => (
  <Art>
    <defs><radialGradient id="sf"><stop stopColor="#22c4ee" /><stop offset="1" stopColor="#1f66e8" /></radialGradient></defs>
    <circle cx="47" cy="47" r="41" fill="#f4f4f4" /><circle cx="47" cy="47" r="37" fill="url(#sf)" />
    <circle cx="47" cy="47" r="32" fill="none" stroke="#fff" strokeWidth="5" strokeDasharray="1 2.300" opacity=".8" />
    <path d="M73 22L43 42l8 9z" fill="#ee2b30" /><path d="M73 22L47 47l4 4z" fill="#b71f28" />
    <path d="M22 71l21-29 8 9z" fill="#f4f4f4" /><path d="M22 71l25-24 4 4z" fill="#c4c4c4" />
  </Art>
);

const LiveApp = () => (
  <span className="my-[7px] flex h-[80px] w-[80px] items-center justify-center bg-gradient-to-b from-[#5c5969] to-[#36333f] font-['Lato',sans-serif] text-[34px] leading-none font-bold text-white">Live</span>
);

const Prefs = () => (
  <Art>
    <defs><linearGradient id="pr" x2="0" y2="1"><stop stopColor="#c7d6de" /><stop offset="1" stopColor="#737373" /></linearGradient></defs>
    <rect x="7" y="9" width="80" height="77" rx="4" fill="url(#pr)" />
    <circle cx="47" cy="47" r="34" fill="#2f2f2f" />
    <circle cx="47" cy="47" r="28" fill="none" stroke="#a9a9a9" strokeWidth="5" strokeDasharray="3 2.860" />
    <circle cx="47" cy="47" r="23" fill="none" stroke="#b4b4b4" strokeWidth="5" />
    <path d="M47 47h22M47 47L36 28M47 47L36 66" stroke="#b4b4b4" strokeWidth="5" /><circle cx="47" cy="47" r="5" fill="#d0d0d0" />
  </Art>
);

const Chrome = () => (
  <Art>
    <circle cx="47" cy="47" r="43" fill="#db4a3f" />
    <path d="M12 27A43 43 0 0 0 47 90l19-34-19-9-18 9z" fill="#22a05c" />
    <path d="M84 27a43 43 0 0 1-38 63l21-34-3-29z" fill="#ffce48" />
    <path d="M12 24L30 60l17-31h38Q75 4 47 4 24 4 12 24z" fill="#db4a3f" />
    <circle cx="47" cy="47" r="20" fill="#f4f4f4" /><circle cx="47" cy="47" r="16" fill="#4c8bf5" />
  </Art>
);

const Terminal = () => (
  <Art>
    <rect x="7" y="11" width="80" height="73" rx="3" fill="#212a30" stroke="#c8cfd2" strokeWidth="1" />
    <text x="11" y="38" fontFamily="Liberation Mono" fontSize="25" fontWeight="700" fill="#35f048">$</text><rect x="29" y="18" width="12" height="24" fill="#19802a" />
  </Art>
);

const Opera = () => (
  <Art>
    <defs><linearGradient id="op" x2="0" y2="1"><stop stopColor="#ff1d30" /><stop offset="1" stopColor="#a80016" /></linearGradient><linearGradient id="oq" x2="0" y2="1"><stop stopColor="#a1040b" /><stop offset="1" stopColor="#ff5a5c" /></linearGradient></defs>
    <circle cx="47" cy="47" r="43" fill="url(#op)" /><path d="M34 18Q56 2 76 16a43 43 0 0 1 0 62Q56 92 34 76q35 0 35-29T34 18z" fill="url(#oq)" />
    <ellipse cx="47" cy="47" rx="21" ry="32" fill="#dadada" />
  </Art>
);

const Papers = () => (
  <g>
    <path d="M1 32l18-9 10 60-8 5z" fill="#f4f4f4" stroke="#bbb" /><path d="M5 21l52-16 18 62-48 18z" fill="#fafafa" stroke="#c8c8c8" />
    <path d="M11 26l42-13M13 31l40-13M14 37l38-12M16 42l37-11M17 48l20-6M28 55l6-2M20 66l34-11M21 71l34-11M23 76l34-11M25 80l30-10" stroke="#999" strokeWidth="1.500" />
  </g>
);

const Rocket = () => (
  <Art>
    <defs><linearGradient id="rk"><stop stopColor="#222" /><stop offset=".4" stopColor="#aaa" /><stop offset="1" stopColor="#222" /></linearGradient></defs>
    <Papers />
    <path d="M47 91V60Q46 22 59 6q13 16 13 54v31l-13-8z" fill="url(#rk)" /><path d="M48 22h22" stroke="#ddd" /><path d="M59 56v30" stroke="#111" strokeWidth="4" /><path d="M47 62l-3 29 12-7zM72 62l3 29-12-7z" fill="#777" />
  </Art>
);

const Activity = () => (
  <Art>
    <rect x="7" y="12" width="80" height="69" rx="3" fill="#0b0b0b" /><rect x="13" y="18" width="68" height="57" fill="#101c1a" />
    <path d="M13 30h68M13 42h68M13 64h68M20 18v57M33 18v57M60 18v57M73 18v57" stroke="#3b6259" />
    <path d="M13 52h14l3-4 3 4h6l3-28 4 36 4-8h4q6-14 12 0h12" fill="none" stroke="#63d2b5" strokeWidth="2" />
  </Art>
);

const Unity = () => <span className="flex size-[94px] items-center justify-center bg-gradient-to-br from-white to-[#c8c8c8]"><FaUnity className="size-[52px] text-black" /></span>;

const Steam = () => (
  <Art>
    <defs><linearGradient id="st" x2="0" y2="1"><stop stopColor="#11204b" /><stop offset=".5" stopColor="#0f3068" /><stop offset="1" stopColor="#1a92c8" /></linearGradient><clipPath id="sc"><circle cx="47" cy="47" r="43" /></clipPath></defs>
    <circle cx="47" cy="47" r="43" fill="url(#st)" />
    <g clipPath="url(#sc)">
      <path d="M0 44l26 12q4-4 10-3l12-17a16 16 0 1 1 15 16L48 63q0 12-13 12-10 0-12-9L0 57z" fill="#f4f4f4" />
      <circle cx="61" cy="35" r="11" fill="none" stroke="#11356e" strokeWidth="3" /><path d="M30 58q10-2 12 6-2 8-12 5" fill="none" stroke="#11356e" strokeWidth="3" />
    </g>
  </Art>
);

const Reaper = () => (
  <Art>
    <path d="M20 12Q32 2 47 2q38 0 41 40-1 2-3 6L60 36 36 18z" fill="#2e98d4" /><path d="M14 20q6-10 14-15l2 26z" fill="#4a6478" /><path d="M7 34q2-8 8-16l14 4q4 8-4 22z" fill="#b06c2a" />
    <path d="M6 38Q8 28 18 32q34 8 27 58Q6 72 6 38z" fill="#62c23a" />
    <path d="M32 28q12-12 32-4 18 8 23 18 2 36-41 50 12-40-14-64z" fill="#b96a58" />
    <path d="M16 26Q36 12 56 22M30 22q20 26 17 66" fill="none" stroke="#f4f4f4" strokeWidth="5" />
  </Art>
);

const TextLines = () => (
  <Art><rect width="94" height="94" fill="#000" /><path d="M27 28h40M27 37h22M27 47h31M27 56h22M27 66h40" stroke="#fff" strokeWidth="4" /></Art>
);

const Photoshop = () => (
  <span className="mt-[1px] mb-[7px] flex h-[86px] w-[88px] items-center justify-center rounded-[16px] border-4 border-[#2fd4fb] bg-[#06262f] font-['Open_Sans',sans-serif] text-[50px] leading-none font-semibold text-[#dff6ff]">Ps</span>
);

const Discord = () => (
  <span className="flex size-[94px] items-center justify-center"><span className="flex size-[82px] items-center justify-center rounded-full border-4 border-[#f0f0f0] bg-[#5068c0]"><FaDiscord className="size-[54px] text-white" /></span></span>
);

const TextEdit = () => (
  <Art>
    <path d="M10 14L72 4l12 74-64 11z" fill="#fff" stroke="#ddd" />
    {Array.from({ length: 11 }, (_, i) => <path key={i} d={`M${12 + i} ${24 + i * 6}l62-9`} stroke="#b8c0c8" />)}
    <path d="M18 14l10 74" stroke="#e8a8a8" /><path d="M76 4l5 3-16 62-11 20 3-24z" fill="#a9c4d8" stroke="#5a7082" /><path d="M57 66l8 3-11 20z" fill="#444" />
  </Art>
);

const Vlc = () => (
  <Art>
    <path d="M14 59h66l7 31H7z" fill="#ff9a18" /><path d="M7 88h80v4H7z" fill="#d85e0a" />
    <path d="M41 2q6-2 12 0l20 72q-26 16-52 0z" fill="#f47316" /><path d="M38 14h18l5 18q-14 4-28 0zM28 50q19 6 38 0l5 18q-24 8-48 0z" fill="#dcdcdc" />
  </Art>
);

const Pdf = () => (
  <Art>
    <path d="M14 2h42q18 14 24 34v52H14z" fill="#fff" stroke="#ccc" /><path d="M56 2q4 20 24 34Q74 10 56 2z" fill="#ddd" />
    <rect x="30" y="24" width="38" height="28" fill="#8a6a3a" /><path d="M26 32l36-6 3 30-36 6z" fill="#3d7bc4" stroke="#fff" strokeWidth="2" /><path d="M28 50l36-4 1 10-36 6z" fill="#d9c7a0" />
    <rect x="55" y="48" width="17" height="17" rx="6" fill="#777" /><circle cx="63" cy="46" r="9" fill="#9db8cc" stroke="#555" strokeWidth="2" />
    <text x="47" y="84" textAnchor="middle" fontFamily="Open Sans" fontSize="15" fill="#555">PDF</text>
  </Art>
);

const Notebook = () => (
  <Art>
    <path d="M22 2h50v78H22z" fill="#f0f0f0" stroke="#999" /><path d="M22 12h28q20 12 20 30v48H22z" fill="#323f96" /><path d="M50 12q2 14 20 30V12z" fill="#fff" />
    <rect x="39" y="18" width="11" height="8" fill="#ccc" /><path d="M22 6v82" stroke="#111" strokeWidth="4" strokeDasharray="4 4" />
  </Art>
);

const FolderArt = () => (
  <Art>
    <path d="M20 2h54v40H20z" fill="#f0ead8" /><path d="M20 2h26q16 8 16 24H20z" fill="#7a705a" /><circle cx="50" cy="38" r="30" fill="#0c2348" /><circle cx="60" cy="29" r="8" fill="none" stroke="#d8c8a0" strokeWidth="4" />
    <path d="M7 22q0-2 3-2h22l6 6h46q3 0 3 3v50q0 3-3 3H10q-3 0-3-3z" fill="#6cc6ef" /><path d="M7 32h80v47q0 3-3 3H10q-3 0-3-3z" fill="#8ad8fb" />
  </Art>
);

const Installer = () => (
  <Art>
    <rect x="3" y="17" width="88" height="60" fill="#fff" stroke="#ccc" /><rect x="3" y="20" width="88" height="2" fill="#2f9fb8" />
    <circle cx="6" cy="18" r="1" fill="#f55" /><circle cx="9" cy="18" r="1" fill="#fb4" /><circle cx="12" cy="18" r="1" fill="#4c4" />
    <circle cx="35" cy="29" r="3" fill="#15b68c" /><text x="40" y="31" fontSize="5" fontFamily="Inter" fill="#333">grammarly</text>
    <circle cx="26" cy="49" r="9" fill="#15b68c" /><path d="M30 46a5 5 0 1 0 1 5h-4" stroke="#fff" strokeWidth="2" fill="none" />
    <path d="M42 46l3 3-3 3M47 46l3 3-3 3M52 46l3 3-3 3" stroke="#77d8b8" fill="none" /><rect x="58" y="39" width="20" height="20" fill="#ddd" /><rect x="60" y="42" width="16" height="14" fill="#6cc6ef" /><path d="M14 67h44" stroke="#999" strokeDasharray="4 1" />
    <rect x="61" y="61" width="28" height="27" rx="2" fill="#e4eef8" /><path d="M61 61h14q-3 8-3 15h5q0 6 1 12H61z" fill="#2a9df8" /><path d="M67 78q8 6 16 0M69 67v3M81 67v3" stroke="#17222f" strokeWidth="1.500" fill="none" />
  </Art>
);

const Trash = () => (
  <Art>
    <path d="M18 16l10-12 12 4 8-5 10 5 12-3 10 11-4 12H22z" fill="#eee" stroke="#999" /><path d="M26 12l8-2 2 10zM46 8l6 12 6-8zM64 10l8 8-10 2z" fill="#554" /><path d="M38 10l8 2-4 8z" fill="#e08a3a" /><path d="M44 14l8 2-4 6z" fill="#3ab0d8" />
    <path d="M14 16q33 14 66 0l-9 66q-24 12-48 0z" fill="#f0f0f0" opacity=".92" /><path d="M26 32l6 44M66 32l-6 42M44 38l2 40" stroke="#e2e2e2" strokeWidth="5" /><path d="M14 16q33 14 66 0" fill="none" stroke="#fff" strokeWidth="2" />
  </Art>
);

const Badge = ({ children }) => (
  <span className="absolute top-[8px] right-0 flex size-[36px] items-center justify-center rounded-full bg-[#fc4846]/95 text-[21px] leading-none text-white">{children}</span>
);

const SpotifyApp = () => (
  <span className="flex size-[94px] items-center justify-center"><span className="flex size-[80px] items-center justify-center rounded-full bg-[#191414]"><FaSpotify className="size-[84px] shrink-0 text-[#30d867]" /></span></span>
);

const APPS = [
  ["Finder", Finder, true], ["Safari", Safari], ["Live", LiveApp, true], ["System Preferences", Prefs, false, "1"], ["Chrome", Chrome, true],
  ["Spotify", SpotifyApp], ["Terminal", Terminal, true], ["Opera", Opera], ["Rocket", Rocket, true], ["Activity Monitor", Activity, true], ["Unity", Unity],
  ["Steam", Steam], ["Reaper", Reaper], ["Text Lines", TextLines], ["Photoshop", Photoshop], null,
  ["Discord", Discord, true, "•"], ["TextEdit", TextEdit, true], ["VLC", Vlc, true], null,
  ["PDF", Pdf], ["Notebook", Notebook], ["Folder", FolderArt], ["Installer", Installer], ["Trash", Trash],
];

function Dock() {
  return (
    <nav aria-label="Dock" className="-mt-[8px] flex pr-[8px] pl-[4px]">
      {APPS.map((a, i) => {
        if (!a) return <span key={i} className="flex w-[44px] justify-center pt-[24px]"><i className="h-[84px] w-[2px] bg-[#9f9f9f]" /></span>;
        const [name, Icon, running, badge] = a;
        return (
          <button key={name} aria-label={name} className="relative flex w-[98px] flex-col items-center pt-[16px]">
            <Icon />
            {running && <i className="mt-[2px] size-[8px] rounded-full bg-[#5c5c5c]" />}
            {badge && <Badge>{badge}</Badge>}
          </button>
        );
      })}
    </nav>
  );
}

export default function App() {
  return (
    <div className="relative flex min-h-screen flex-col overflow-hidden bg-[#1b2138] font-['Inter',sans-serif]">
      <MenuBar />
      <div className="mt-[2px] bg-[#585858] pb-[6px]">
        <main className="flex flex-col overflow-hidden rounded-t-[10px] rounded-b-[8px] border-b border-[#2e2e2e] bg-[#9a9a9a] pb-[15px]">
          <div className="flex h-[44px] shrink-0 items-center border-b border-[#cfcfcf] bg-[#f6f6f6]">
            <div className="flex w-[132px] gap-[16px] pl-[16px]">
              {["Close", "Minimize", "Zoom"].map((l) => <button key={l} aria-label={l} className="size-[24px] rounded-full border border-[#cfcfcf] bg-[#dcdcdc]" />)}
            </div>
            <h1 className="flex-1 pt-[3px] pr-[132px] text-center text-[26px] leading-none whitespace-pre text-[#acacac]">{"quaranbeat3  [Albeton]"}</h1>
          </div>
          <ControlBar />
          <div className="flex h-[1248px] shrink-0 gap-[16px] px-[15px]">
            <Browser />
            <Arrangement />
          </div>
          <div className="mt-[15px]"><BottomStrip /></div>
        </main>
      </div>
      <footer className="flex flex-1 justify-center bg-gradient-to-r from-[#090d18] via-[#2a2528] to-[#2c1f22]">
        <div className="flex h-[116px] rounded-t-[10px] bg-[#dadada]"><Dock /></div>
      </footer>
      <ExportDialog />
      <ProgressDialog percent={30} />
    </div>
  );
}
